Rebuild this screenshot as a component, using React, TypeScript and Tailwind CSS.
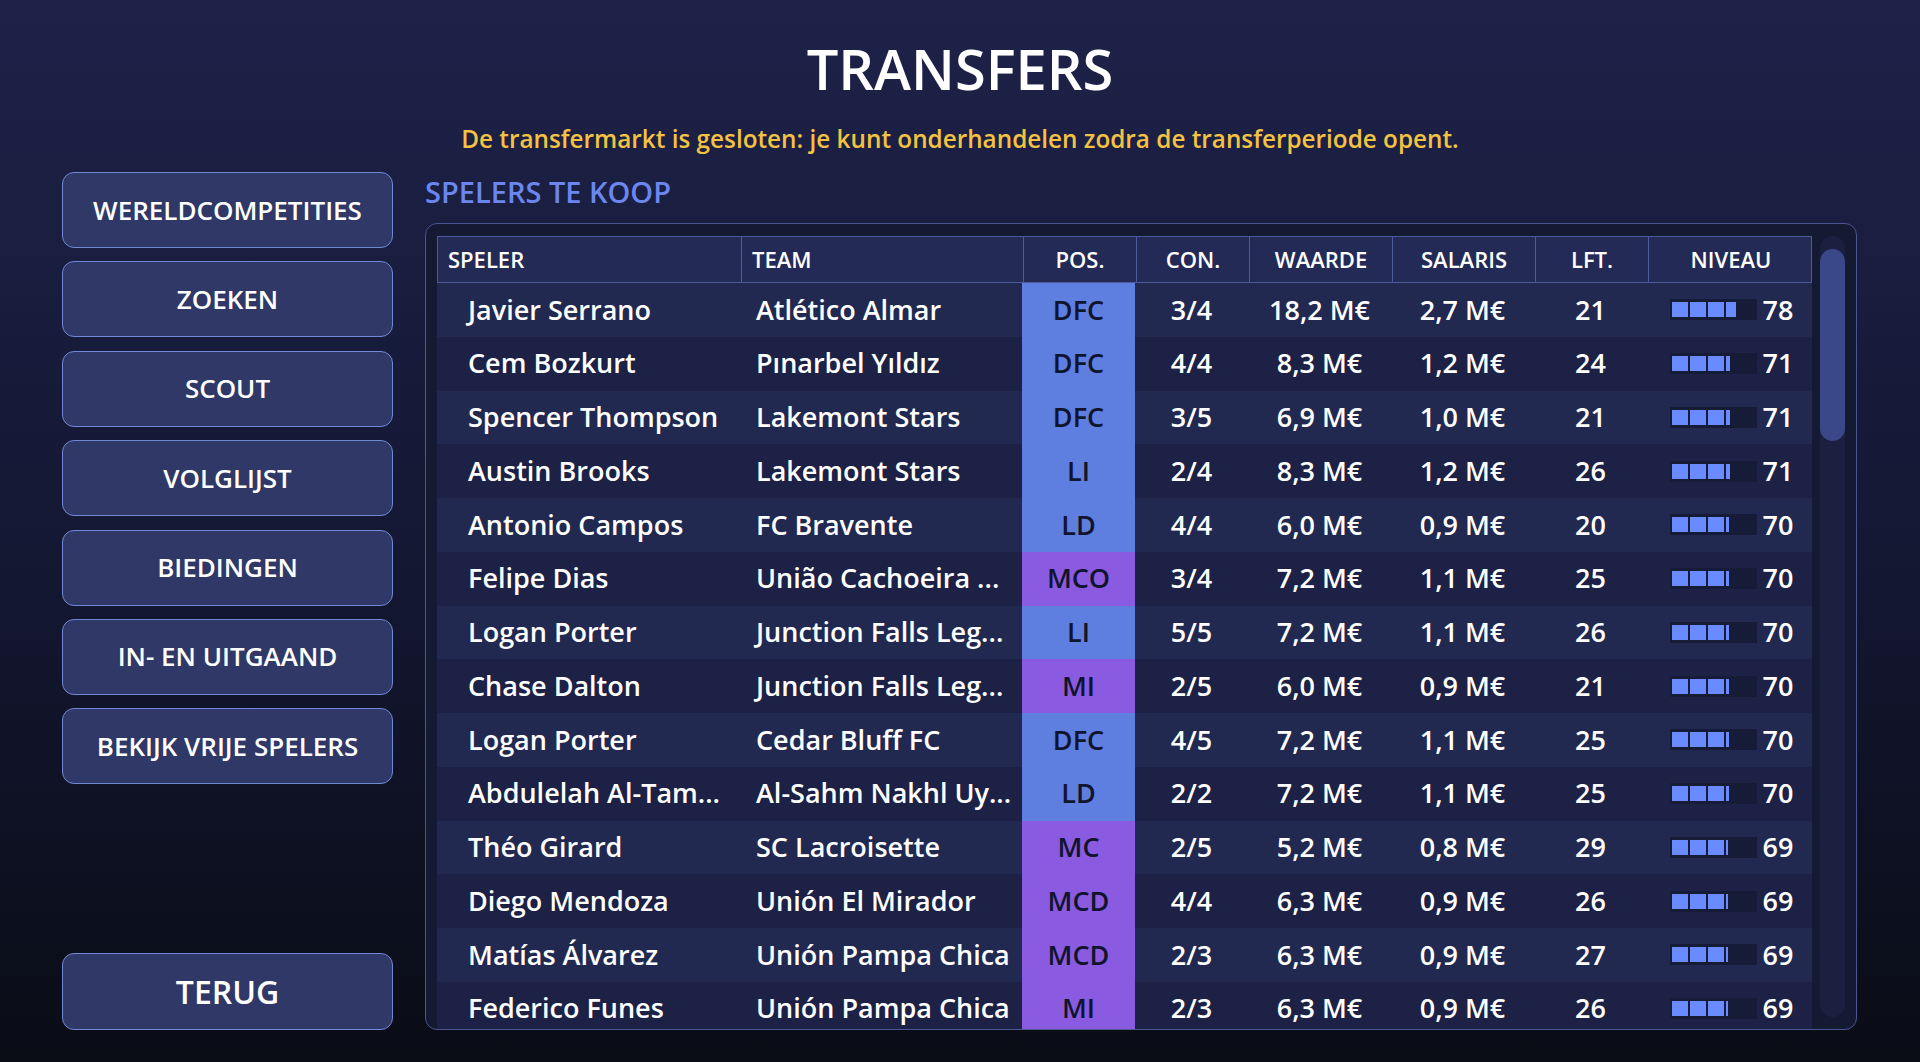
import React from 'react';

type Player = {
    name: string;
    team: string;
    pos: string;
    con: string;
    value: string;
    wage: string;
    age: number;
    level: number;
};

const players: Player[] = [
    { name: 'Javier Serrano', team: 'Atlético Almar', pos: 'DFC', con: '3/4', value: '18,2 M€', wage: '2,7 M€', age: 21, level: 78 },
    { name: 'Cem Bozkurt', team: 'Pınarbel Yıldız', pos: 'DFC', con: '4/4', value: '8,3 M€', wage: '1,2 M€', age: 24, level: 71 },
    { name: 'Spencer Thompson', team: 'Lakemont Stars', pos: 'DFC', con: '3/5', value: '6,9 M€', wage: '1,0 M€', age: 21, level: 71 },
    { name: 'Austin Brooks', team: 'Lakemont Stars', pos: 'LI', con: '2/4', value: '8,3 M€', wage: '1,2 M€', age: 26, level: 71 },
    { name: 'Antonio Campos', team: 'FC Bravente', pos: 'LD', con: '4/4', value: '6,0 M€', wage: '0,9 M€', age: 20, level: 70 },
    { name: 'Felipe Dias', team: 'União Cachoeira ...', pos: 'MCO', con: '3/4', value: '7,2 M€', wage: '1,1 M€', age: 25, level: 70 },
    { name: 'Logan Porter', team: 'Junction Falls Leg...', pos: 'LI', con: '5/5', value: '7,2 M€', wage: '1,1 M€', age: 26, level: 70 },
    { name: 'Chase Dalton', team: 'Junction Falls Leg...', pos: 'MI', con: '2/5', value: '6,0 M€', wage: '0,9 M€', age: 21, level: 70 },
    { name: 'Logan Porter', team: 'Cedar Bluff FC', pos: 'DFC', con: '4/5', value: '7,2 M€', wage: '1,1 M€', age: 25, level: 70 },
    { name: 'Abdulelah Al-Tam...', team: 'Al-Sahm Nakhl Uy...', pos: 'LD', con: '2/2', value: '7,2 M€', wage: '1,1 M€', age: 25, level: 70 },
    { name: 'Théo Girard', team: 'SC Lacroisette', pos: 'MC', con: '2/5', value: '5,2 M€', wage: '0,8 M€', age: 29, level: 69 },
    { name: 'Diego Mendoza', team: 'Unión El Mirador', pos: 'MCD', con: '4/4', value: '6,3 M€', wage: '0,9 M€', age: 26, level: 69 },
    { name: 'Matías Álvarez', team: 'Unión Pampa Chica', pos: 'MCD', con: '2/3', value: '6,3 M€', wage: '0,9 M€', age: 27, level: 69 },
    { name: 'Federico Funes', team: 'Unión Pampa Chica', pos: 'MI', con: '2/3', value: '6,3 M€', wage: '0,9 M€', age: 26, level: 69 },
];

const menu = ['WERELDCOMPETITIES', 'ZOEKEN', 'SCOUT', 'VOLGLIJST', 'BIEDINGEN', 'IN- EN UITGAAND', 'BEKIJK VRIJE SPELERS'];

// defenders blue, midfielders purple
const midfield = ['MCO', 'MI', 'MC', 'MCD'];

const cols = 'grid grid-cols-[303px_282px_113px_113px_143px_143px_113px_165px]';

function LevelBar({ level }: { level: number }) {
    return (
        <div className="flex items-center gap-[6px]">
            <div className="flex h-[21px] w-[87px] items-stretch bg-[#161b37] px-[2px] py-[3px]">
                <div className="h-full overflow-hidden" style={{ width: `${level * 0.82}px` }}>
                    <div className="flex h-full gap-[2px]">
                        {[0, 1, 2, 3, 4].map((i) => (
                            <div key={i} className="h-full w-[16px] shrink-0 bg-[#6a8bff]" />
                        ))}
                    </div>
                </div>
            </div>
            <span>{level}</span>
        </div>
    );
}

function MenuButton({ label, big }: { label: string; big?: boolean }) {
    return (
        <button
            className={`flex w-full items-center justify-center rounded-[12px] border-[1.5px] border-[#7088d6] bg-[#2f3866] font-semibold text-white ${
                big ? 'h-[77px] text-[32px]' : 'h-[76px] text-[26px]'
            }`}
        >
            {label}
        </button>
    );
}

export default function App() {
    return (
        <div className="h-[1062px] w-full overflow-hidden bg-gradient-to-b from-[#1e2249] via-[#141834] to-[#0a0c16] font-['Open_Sans',sans-serif] text-white">
            <header className="flex h-[172px] flex-col items-center pt-[40px]">
                <h1 className="text-[56px] font-semibold leading-[56px]">TRANSFERS</h1>
                <p className="mt-[27px] text-[24.3px] font-semibold leading-[32px] text-[#f3c243]">
                    De transfermarkt is gesloten: je kunt onderhandelen zodra de transferperiode opent.
                </p>
            </header>

            <div className="flex h-[858px] gap-[32px] pl-[62px] pr-[63px]">
                <nav className="flex w-[331px] shrink-0 flex-col gap-[13.4px]">
                    {menu.map((m) => (
                        <MenuButton key={m} label={m} />
                    ))}
                    <div className="mt-auto">
                        <MenuButton label="TERUG" big />
                    </div>
                </nav>

                <section className="flex min-w-0 flex-1 flex-col">
                    <h2 className="h-[40px] text-[29px] font-semibold leading-[40px] text-[#6b87ef]">SPELERS TE KOOP</h2>

                    <div className="mt-[11px] flex h-[807px] gap-[8px] overflow-hidden rounded-[12px] border-[1.5px] border-[#4a5592] bg-[#151a33] pl-[11px] pr-[11px] pt-[12px]">
                        <div className="w-[1375px] shrink-0">
                            <div className={`${cols} h-[47px] border-[1.5px] border-[#4c5a9e] bg-[#232a56] text-[22px] font-semibold`}>
                                <div className="flex items-center pl-[10px]">SPELER</div>
                                <div className="flex items-center border-l-[1.5px] border-[#4c5a9e] pl-[10px]">TEAM</div>
                                {['POS.', 'CON.', 'WAARDE', 'SALARIS', 'LFT.', 'NIVEAU'].map((h) => (
                                    <div key={h} className="flex items-center justify-center border-l-[1.5px] border-[#4c5a9e]">
                                        {h}
                                    </div>
                                ))}
                            </div>

                            {players.map((p, i) => (
                                <div
                                    key={i}
                                    className={`${cols} h-[53.75px] text-[27px] font-semibold ${i % 2 === 0 ? 'bg-[#212951]' : 'bg-[#1c2145]'}`}
                                >
                                    <div className="flex items-center whitespace-nowrap pl-[31px]">{p.name}</div>
                                    <div className="flex items-center whitespace-nowrap pl-[16px]">{p.team}</div>
                                    <div
                                        className={`flex items-center justify-center text-[#10142c] ${
                                            midfield.includes(p.pos) ? 'bg-[#8a5be0]' : 'bg-[#5e7ee0]'
                                        }`}
                                    >
                                        {p.pos}
                                    </div>
                                    <div className="flex items-center justify-center">{p.con}</div>
                                    <div className="flex items-center justify-center">{p.value}</div>
                                    <div className="flex items-center justify-center">{p.wage}</div>
                                    <div className="flex items-center justify-center">{p.age}</div>
                                    <div className="flex items-center justify-center pl-[4px]">
                                        <LevelBar level={p.level} />
                                    </div>
                                </div>
                            ))}
                        </div>

                        {/* scrollbar */}
                        <div className="mb-[12px] w-[25px] shrink-0 rounded-full bg-[#1b2040] pt-[13px]">
                            <div className="h-[192px] rounded-full bg-[#3a4788]" />
                        </div>
                    </div>
                </section>
            </div>
        </div>
    );
}
